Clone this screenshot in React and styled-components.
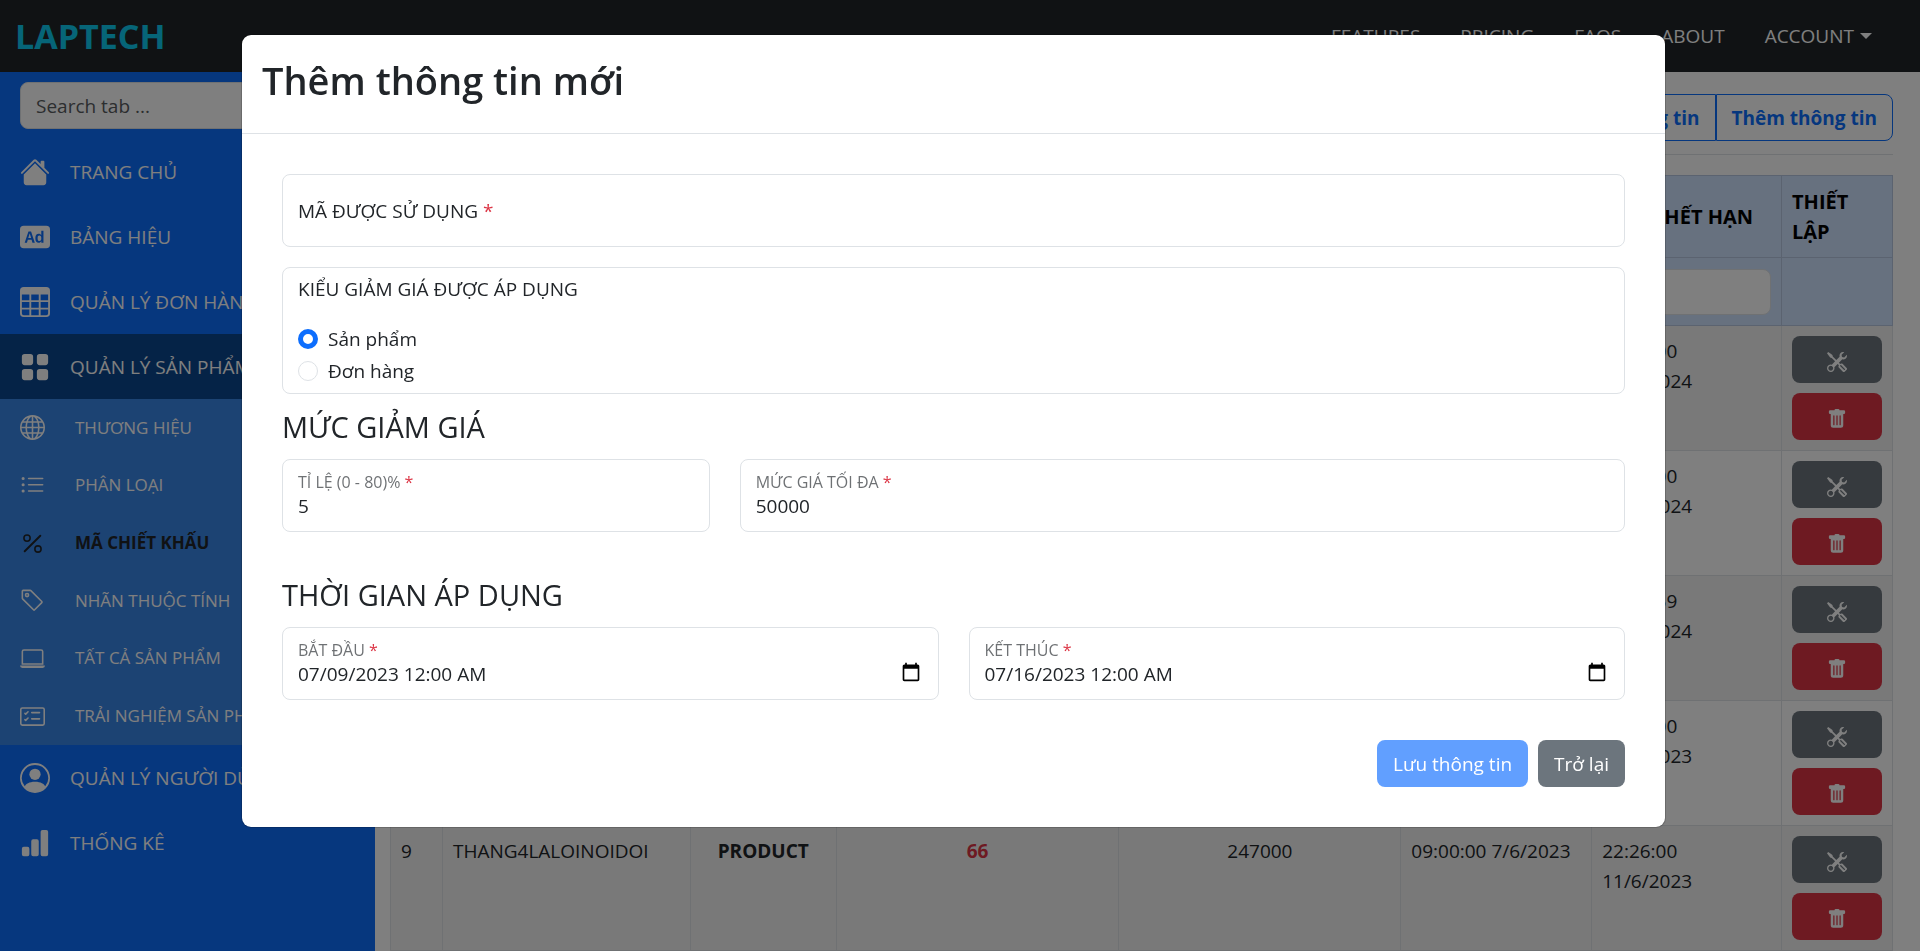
import React from "react";
import styled, { createGlobalStyle } from "styled-components";
import {
  BsHouseFill,
  BsBadgeAdFill,
  BsTable,
  BsGridFill,
  BsGlobe,
  BsListUl,
  BsPercent,
  BsTag,
  BsLaptop,
  BsCardChecklist,
  BsPersonCircle,
  BsBarChartFill,
  BsTools,
  BsTrashFill,
} from "react-icons/bs";

const GlobalStyle = createGlobalStyle`
  *, *::before, *::after { box-sizing: border-box; }
  body {
    margin: 0;
    overflow: hidden;
    background: #fff;
    color: #212529;
    font: 400 19px/30px "Open Sans", "Noto Sans", sans-serif;
  }
  button, input { font: inherit; color: inherit; }
  h1, h2 { margin: 0; }
`;

const Page = styled.div`
  display: flex;
  flex-direction: column;
  height: 100vh;
  overflow: hidden;
`;

const Navbar = styled.header`
  display: flex;
  flex: none;
  align-items: center;
  justify-content: space-between;
  height: 72px;
  padding: 0 48px 0 15px;
  background: #212529;
`;

const Brand = styled.a`
  color: #0dcaf0;
  font-size: 34px;
  font-weight: 700;
  line-height: 48px;
  text-decoration: none;
`;

const NavLinks = styled.nav`
  display: flex;
  align-items: center;
  gap: 40px;
`;

const NavLink = styled.a`
  display: flex;
  align-items: center;
  gap: 6px;
  color: #fff;
  text-decoration: none;
`;

const Caret = styled.span`
  border: 6px solid transparent;
  border-top-color: currentColor;
  border-bottom: 0;
`;

const Main = styled.div`
  display: flex;
  flex: 1;
  min-height: 0;
`;

const Sidebar = styled.aside`
  flex: none;
  width: 375px;
  padding-top: 10px;
  background: #0d6efd;
  color: #fff;
`;

const SearchWrap = styled.div`
  padding: 0 20px;
  margin-bottom: 10px;
`;

const SearchInput = styled.input`
  display: block;
  width: 100%;
  height: 47px;
  padding: 0 15px;
  border: 1px solid #dee2e6;
  border-radius: 8px;
  background: #fff;
  &::placeholder { color: #595c5f; opacity: 1; }
`;

const MenuItem = styled.a`
  display: flex;
  align-items: center;
  gap: 20px;
  height: 65px;
  padding: 0 20px;
  color: #fff;
  text-decoration: none;
  white-space: nowrap;
  background: ${(p) => (p.$active ? "#0b478f" : "transparent")};
  svg { flex: none; width: 30px; height: 30px; }
`;

const SubMenu = styled.div`
  display: grid;
  grid-auto-rows: 1fr;
  height: 346px;
  background: #3986e7;
`;

const SubItem = styled.a`
  display: flex;
  align-items: center;
  gap: 30px;
  padding: 0 20px;
  color: ${(p) => (p.$active ? "#212529" : "#fff")};
  font-size: 17px;
  font-weight: ${(p) => (p.$active ? 700 : 400)};
  text-decoration: none;
  white-space: nowrap;
  svg { flex: none; width: 25px; height: 25px; }
`;

const Content = styled.main`
  flex: 1;
  min-width: 0;
  padding: 22px 27px 0 15px;
`;

const Toolbar = styled.div`
  display: flex;
  justify-content: flex-end;
  padding-bottom: 13px;
  margin-bottom: 20px;
  border-bottom: 1px solid #dee2e6;
`;

const ToolButton = styled.button`
  height: 47px;
  padding: 0 15px;
  border: 1px solid #0d6efd;
  background: #fff;
  color: #0d6efd;
  font-weight: 700;
  &:first-child { border-radius: 8px 0 0 8px; }
  &:last-child { border-radius: 0 8px 8px 0; }
`;

const Table = styled.table`
  width: 100%;
  table-layout: fixed;
  border-collapse: collapse;
  th, td {
    height: 125px;
    padding: 10px;
    border: 1px solid #dee2e6;
    text-align: left;
    vertical-align: top;
  }
  thead th {
    height: 82px;
    border-color: #b6c7e1;
    background: #cfe2ff;
    color: #000;
    font-size: 20px;
    font-weight: 700;
    vertical-align: middle;
  }
  thead td {
    height: 68px;
    border-color: #b6c7e1;
    background: #cfe2ff;
    vertical-align: middle;
  }
  tbody tr:nth-child(odd) td { background: #f2f2f2; }
`;

const FilterInput = styled.input`
  display: block;
  width: 100%;
  height: 46px;
  padding: 0 15px;
  border: 1px solid #dee2e6;
  border-radius: 8px;
  background: #fff;
`;

const Center = styled.div`
  text-align: center;
  font-weight: ${(p) => (p.$bold ? 700 : 400)};
  color: ${(p) => (p.$danger ? "#dc3545" : "inherit")};
`;

const Actions = styled.div`
  display: flex;
  flex-direction: column;
  gap: 10px;
`;

const IconButton = styled.button`
  display: flex;
  align-items: center;
  justify-content: center;
  width: 100%;
  height: 47px;
  padding: 4px 0 0;
  border: 0;
  border-radius: 8px;
  color: #fff;
  background: ${(p) => (p.$danger ? "#dc3545" : "#6c757d")};
  svg { width: 20px; height: 20px; }
`;

const Overlay = styled.div`
  position: fixed;
  inset: 0;
  display: flex;
  align-items: flex-start;
  justify-content: center;
  padding: 34px 13px 34px 0;
  background: rgba(0, 0, 0, 0.5);
`;

const Modal = styled.section`
  width: 100%;
  max-width: 1425px;
  border: 1px solid rgba(0, 0, 0, 0.17);
  border-radius: 10px;
  background: #fff;
  background-clip: padding-box;
`;

const ModalHeader = styled.div`
  padding: 21px 20px 29px;
  border-bottom: 1px solid #dee2e6;
`;

const ModalTitle = styled.h1`
  font-size: 38px;
  font-weight: 600;
  line-height: 48px;
`;

const ModalBody = styled.form`
  padding: 40px;
`;

const Outline = styled.div`
  height: ${(p) => (p.$tall ? 127 : 73)}px;
  padding: ${(p) => (p.$tall ? "6px 15px" : "0 15px")};
  border: 1px solid #dee2e6;
  border-radius: 8px;
`;

const CodeField = styled(Outline)`
  display: flex;
  align-items: center;
  gap: 15px;
  margin-bottom: 20px;
`;

const Field = styled(Outline)`
  display: flex;
  flex-direction: column;
  padding-top: 10px;
  grid-column: span ${(p) => p.$span};
`;

const Label = styled.label`
  color: rgba(33, 37, 41, 0.65);
  font-size: 16px;
  line-height: 24px;
`;

const Star = styled.span`
  color: #dc3545;
`;

const FieldLine = styled.div`
  display: flex;
  align-items: center;
  height: 24px;
`;

const FieldInput = styled.input`
  flex: 1;
  min-width: 0;
  height: 24px;
  padding: 0;
  border: 0;
  outline: 0;
  background: transparent;
  line-height: 24px;
`;

const PickerButton = styled.button`
  display: flex;
  padding: 0 2px 4px;
  border: 0;
  background: transparent;
  color: #000;
`;

const GroupTitle = styled.div`
  margin-bottom: 19px;
`;

const RadioRow = styled.label`
  display: flex;
  align-items: center;
  gap: 10px;
  height: 32px;
`;

const Radio = styled.input`
  appearance: none;
  width: 20px;
  height: 20px;
  margin: 0;
  border: 1px solid #dee2e6;
  border-radius: 50%;
  background: #fff;
  &:checked { border: 5px solid #0d6efd; }
`;

const SectionTitle = styled.h2`
  margin: ${(p) => (p.$spaced ? 45 : 15)}px 0 14px;
  font-size: 29px;
  font-weight: 400;
  line-height: 36px;
`;

const FieldRow = styled.div`
  display: grid;
  grid-template-columns: repeat(12, minmax(0, 1fr));
  column-gap: 30px;
`;

const Footer = styled.div`
  display: flex;
  justify-content: flex-end;
  gap: 10px;
  margin-top: 40px;
`;

const Button = styled.button`
  height: 47px;
  padding: 0 16px;
  border: 0;
  border-radius: 8px;
  color: #fff;
  background: ${(p) => (p.$primary ? "#619fff" : "#6c757d")};
`;

const subItems = [
  [BsGlobe, "THƯƠNG HIỆU"],
  [BsListUl, "PHÂN LOẠI"],
  [BsPercent, "MÃ CHIẾT KHẤU"],
  [BsTag, "NHÃN THUỘC TÍNH"],
  [BsLaptop, "TẤT CẢ SẢN PHẨM"],
  [BsCardChecklist, "TRẢI NGHIỆM SẢN PHẨM"],
];

const menu = [
  { icon: BsHouseFill, text: "TRANG CHỦ" },
  { icon: BsBadgeAdFill, text: "BẢNG HIỆU" },
  { icon: BsTable, text: "QUẢN LÝ ĐƠN HÀNG" },
  { icon: BsGridFill, text: "QUẢN LÝ SẢN PHẨM", open: true },
  { icon: BsPersonCircle, text: "QUẢN LÝ NGƯỜI DÙNG" },
  { icon: BsBarChartFill, text: "THỐNG KÊ" },
];

const columns = [
  { key: "id", width: 52 },
  { key: "code", width: 248, filter: "Mã" },
  { key: "type", width: 146, filter: "Kiểu" },
  { key: "rate", width: 283, filter: "Tỉ lệ" },
  { key: "max", width: 282, filter: "Mức giá tối đa" },
  { key: "start", width: 191, filter: "Ngày bắt đầu" },
  { key: "end", width: 190, filter: "Ngày hết hạn", title: "NGÀY HẾT HẠN" },
  { key: "setting", width: 111, title: "THIẾT LẬP" },
];

const totalWidth = columns.reduce((sum, c) => sum + c.width, 0);

const rows = [
  { key: 5, end: "22:00:00 11/6/2024" },
  { key: 6, end: "22:00:00 12/6/2024" },
  { key: 7, end: "23:59:59 13/6/2024" },
  { key: 8, end: "22:00:00 10/6/2023" },
  {
    key: 9,
    id: 9,
    code: "THANG4LALOINOIDOI",
    type: "PRODUCT",
    rate: 66,
    max: 247000,
    start: "09:00:00 7/6/2023",
    end: "22:26:00 11/6/2023",
  },
];

function CalendarIcon() {
  return (
    <svg width="20" height="20" viewBox="0 0 24 24" fill="currentColor" aria-hidden="true">
      <path d="M20 3h-1V1h-2v2H7V1H5v2H4c-1.1 0-2 .9-2 2v16c0 1.1.9 2 2 2h16c1.1 0 2-.9 2-2V5c0-1.1-.9-2-2-2zm0 18H4V8h16v13z" />
    </svg>
  );
}

function InputField({ id, label, span, picker, value }) {
  return (
    <Field $span={span}>
      <Label htmlFor={id}>
        {label} <Star>*</Star>
      </Label>
      <FieldLine>
        <FieldInput id={id} type="text" defaultValue={value} />
        {picker && (
          <PickerButton type="button" aria-label="Chọn ngày">
            <CalendarIcon />
          </PickerButton>
        )}
      </FieldLine>
    </Field>
  );
}

export default function App() {
  return (
    <>
      <GlobalStyle />
      <Page>
        <Navbar>
          <Brand href="#">LAPTECH</Brand>
          <NavLinks>
            {["FEATURES", "PRICING", "FAQS", "ABOUT"].map((t) => (
              <NavLink key={t} href="#">{t}</NavLink>
            ))}
            <NavLink href="#">ACCOUNT <Caret /></NavLink>
          </NavLinks>
        </Navbar>
        <Main>
          <Sidebar>
            <SearchWrap>
              <SearchInput aria-label="Search tab" placeholder="Search tab ..." />
            </SearchWrap>
            {menu.map(({ icon: Icon, text, open }) => (
              <React.Fragment key={text}>
                <MenuItem href="#" $active={open}><Icon />{text}</MenuItem>
                {open && (
                  <SubMenu>
                    {subItems.map(([SubIcon, label], i) => (
                      <SubItem key={label} href="#" $active={i === 2}><SubIcon />{label}</SubItem>
                    ))}
                  </SubMenu>
                )}
              </React.Fragment>
            ))}
          </Sidebar>
          <Content>
            <Toolbar>
              <ToolButton type="button">Tải lại thông tin</ToolButton>
              <ToolButton type="button">Thêm thông tin</ToolButton>
            </Toolbar>
            <Table>
              <colgroup>
                {columns.map((c) => (
                  <col key={c.key} style={{ width: `${(c.width / totalWidth) * 100}%` }} />
                ))}
              </colgroup>
              <thead>
                <tr>{columns.map((c) => <th key={c.key} scope="col">{c.title}</th>)}</tr>
                <tr>
                  {columns.map((c) => (
                    <td key={c.key}>{c.filter && <FilterInput aria-label={c.filter} />}</td>
                  ))}
                </tr>
              </thead>
              <tbody>
                {rows.map((row) => (
                  <tr key={row.key}>
                    <td>{row.id}</td>
                    <td>{row.code}</td>
                    <td><Center $bold>{row.type}</Center></td>
                    <td><Center $bold $danger>{row.rate}</Center></td>
                    <td><Center>{row.max}</Center></td>
                    <td>{row.start}</td>
                    <td>{row.end}</td>
                    <td>
                      <Actions>
                        <IconButton type="button" aria-label="Sửa"><BsTools /></IconButton>
                        <IconButton type="button" aria-label="Xóa" $danger><BsTrashFill /></IconButton>
                      </Actions>
                    </td>
                  </tr>
                ))}
              </tbody>
            </Table>
          </Content>
        </Main>
      </Page>
      <Overlay>
        <Modal role="dialog" aria-modal="true" aria-labelledby="modal-title">
          <ModalHeader>
            <ModalTitle id="modal-title">Thêm thông tin mới</ModalTitle>
          </ModalHeader>
          <ModalBody>
            <CodeField>
              <label htmlFor="code">MÃ ĐƯỢC SỬ DỤNG <Star>*</Star></label>
              <FieldInput id="code" type="text" />
            </CodeField>
            <Outline $tall role="radiogroup" aria-labelledby="type-title">
              <GroupTitle id="type-title">KIỂU GIẢM GIÁ ĐƯỢC ÁP DỤNG</GroupTitle>
              <RadioRow><Radio type="radio" name="type" defaultChecked />Sản phẩm</RadioRow>
              <RadioRow><Radio type="radio" name="type" />Đơn hàng</RadioRow>
            </Outline>
            <SectionTitle>MỨC GIẢM GIÁ</SectionTitle>
            <FieldRow>
              <InputField id="rate" span={4} label="TỈ LỆ (0 - 80)%" value="5" />
              <InputField id="max" span={8} label="MỨC GIÁ TỐI ĐA" value="50000" />
            </FieldRow>
            <SectionTitle $spaced>THỜI GIAN ÁP DỤNG</SectionTitle>
            <FieldRow>
              <InputField id="start" span={6} label="BẮT ĐẦU" value="07/09/2023 12:00 AM" picker />
              <InputField id="end" span={6} label="KẾT THÚC" value="07/16/2023 12:00 AM" picker />
            </FieldRow>
            <Footer>
              <Button type="button" $primary>Lưu thông tin</Button>
              <Button type="button">Trở lại</Button>
            </Footer>
          </ModalBody>
        </Modal>
      </Overlay>
    </>
  );
}
